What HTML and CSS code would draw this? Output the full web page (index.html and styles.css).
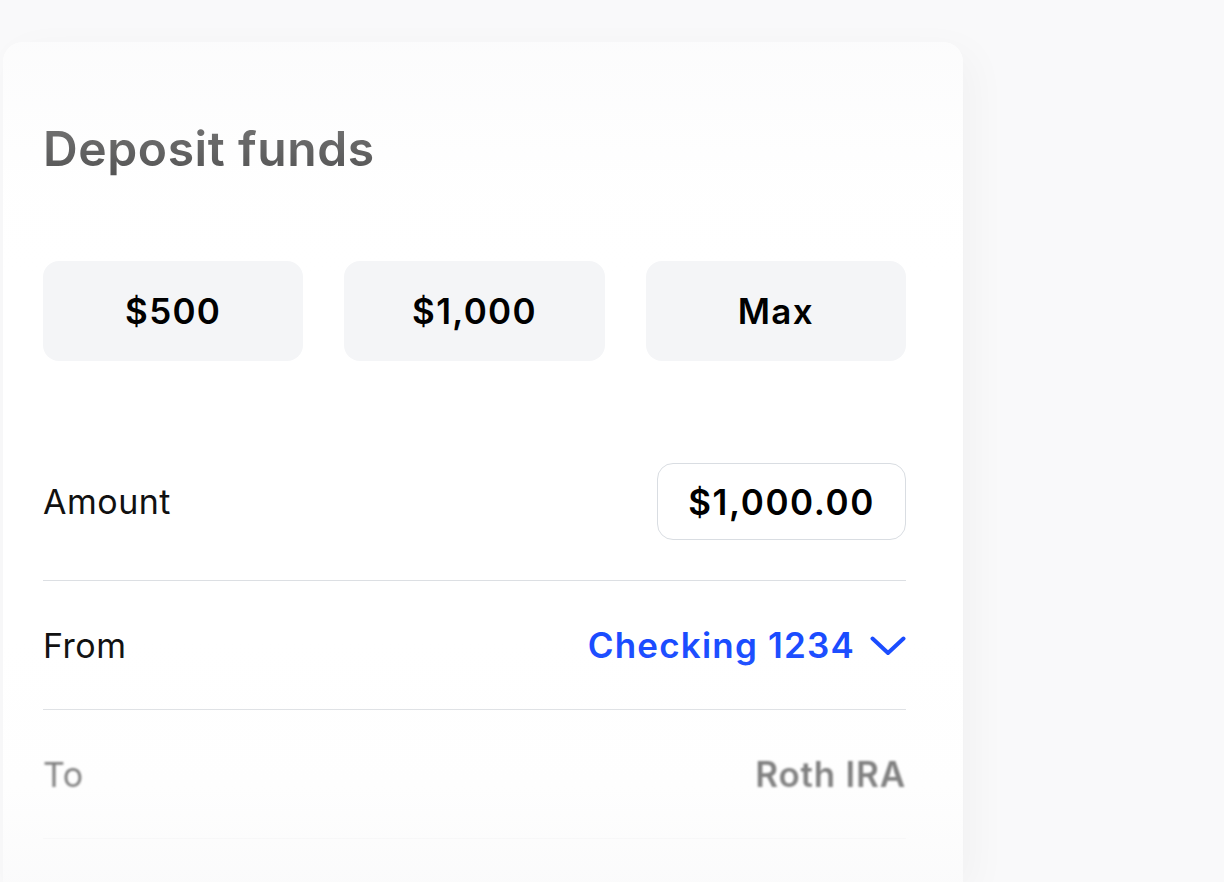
FILE: index.html
```html
<!DOCTYPE html>
<html lang="en">
<head>
<meta charset="utf-8">
<title>Deposit funds</title>
<link rel="stylesheet" href="styles.css">
</head>
<body>
<div class="card">
  <h1 class="title">Deposit funds</h1>
  <div class="presets">
    <button class="preset">$500</button>
    <button class="preset">$1,000</button>
    <button class="preset">Max</button>
  </div>
  <div class="row row-amount">
    <span class="label">Amount</span>
    <div class="amount-field">$1,000.00</div>
  </div>
  <div class="row">
    <span class="label">From</span>
    <span class="account">Checking 1234
      <svg class="chevron" width="36" height="20" viewBox="0 0 36 20"><polyline points="2.5,2.5 18,17 33.5,2.5" fill="none" stroke="#1a4cff" stroke-width="4" stroke-linecap="round" stroke-linejoin="round"/></svg>
    </span>
  </div>
  <div class="row row-faded">
    <span class="label">To</span>
    <span class="dest">Roth IRA</span>
  </div>
  <div class="fade-top"></div>
  <div class="fade-bottom"></div>
</div>
</body>
</html>
```

FILE: styles.css
```css
html, body {
  margin: 0;
  padding: 0;
}
body {
  background: #f9f9fa;
  font-family: "Inter", "Noto Sans", sans-serif;
  width: 1224px;
  height: 882px;
  overflow: hidden;
}
.card {
  position: relative;
  margin: 42px 0 0 3px;
  width: 960px;
  height: 840px;
  box-sizing: border-box;
  padding: 78px 57px 0 40px;
  background: #ffffff;
  border-radius: 20px 20px 0 0;
  box-shadow: 10px 10px 40px rgba(0, 0, 0, 0.035);
}
.title {
  margin: 0;
  font-size: 48px;
  line-height: 58px;
  font-weight: 600;
  color: #3a3a3a;
  letter-spacing: 0.6px;
  filter: blur(0.7px);
}
.presets {
  margin-top: 83px;
  display: grid;
  grid-template-columns: repeat(3, 1fr);
  gap: 41px;
}
.preset {
  height: 100px;
  border: 0;
  border-radius: 16px;
  background: #f4f5f7;
  font-family: inherit;
  font-size: 35px;
  font-weight: 600;
  color: #000;
  padding: 0;
  letter-spacing: 1.3px;
}
.row {
  display: flex;
  align-items: center;
  justify-content: space-between;
  height: 128px;
  border-bottom: 1px solid #dcdfe3;
}
.row-amount {
  margin-top: 62px;
  height: auto;
  padding: 40px 0;
}
.label {
  font-size: 34px;
  font-weight: 400;
  color: #111;
  letter-spacing: 0.5px;
}
.amount-field {
  height: 77px;
  box-sizing: border-box;
  padding: 0 30px;
  display: flex;
  align-items: center;
  border: 1.5px solid #d9dde2;
  border-radius: 16px;
  font-size: 35px;
  font-weight: 600;
  color: #000;
  letter-spacing: 1.6px;
}
.account {
  display: flex;
  align-items: center;
  gap: 15px;
  font-size: 35px;
  font-weight: 600;
  color: #1a4cff;
  letter-spacing: 1.2px;
}
.chevron {
  display: block;
  margin-top: 2px;
}
.row-faded {
  border-bottom-color: #f5f5f6;
}
.row-faded .label,
.row-faded .dest {
  color: #666;
  filter: blur(1.3px);
}
.dest {
  font-size: 35px;
  font-weight: 600;
  letter-spacing: 0.8px;
}
.fade-top {
  position: absolute;
  left: 0;
  right: 0;
  top: 0;
  height: 230px;
  border-radius: 20px 20px 0 0;
  background: linear-gradient(to bottom, rgba(249, 249, 250, 0.55), rgba(251, 251, 251, 0.12) 60%, rgba(255, 255, 255, 0));
  pointer-events: none;
}
.fade-bottom {
  position: absolute;
  left: 0;
  right: 0;
  top: 600px;
  bottom: 0;
  background: linear-gradient(to bottom, rgba(250, 250, 250, 0), rgba(250, 250, 250, 0.2) 60%, rgba(249, 249, 250, 0.75));
  pointer-events: none;
}
```
